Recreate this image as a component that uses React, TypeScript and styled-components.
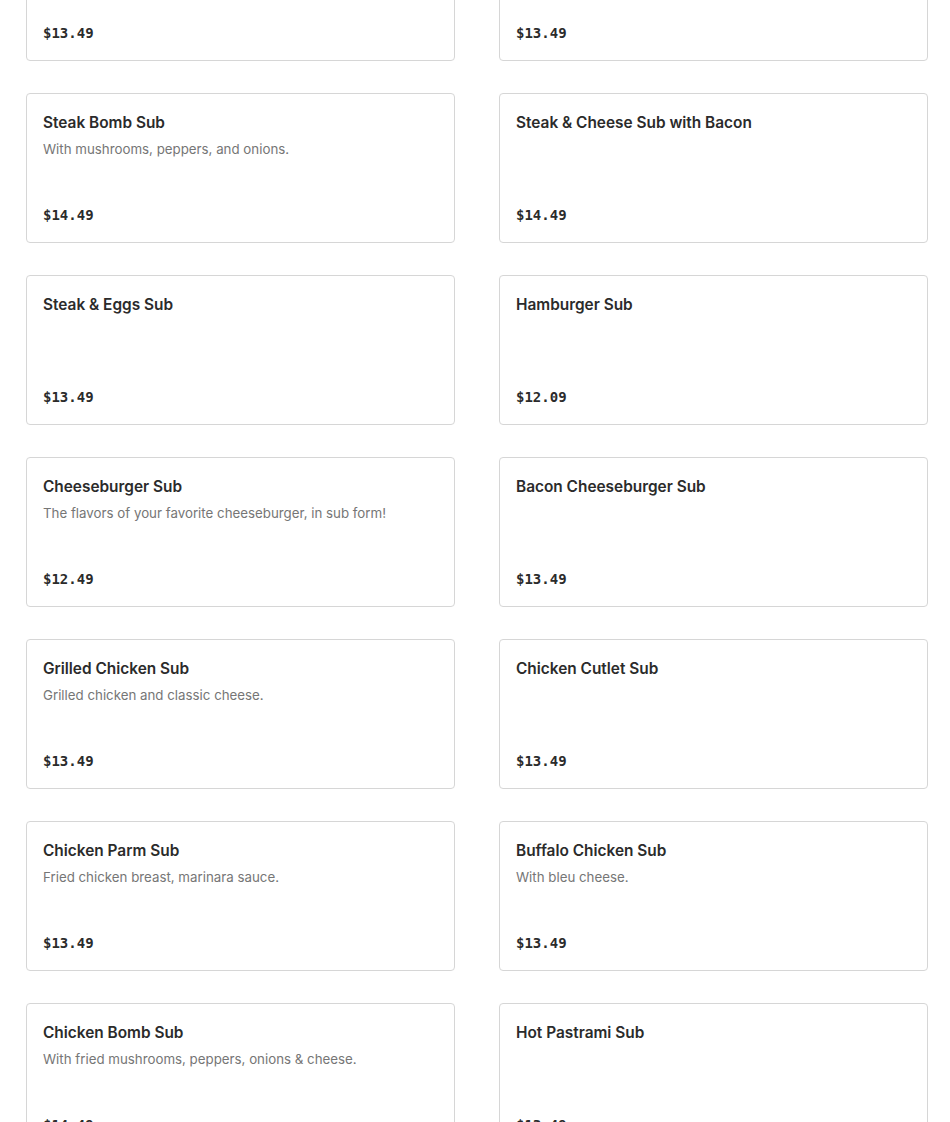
import { useLayoutEffect } from 'react';
import styled, { createGlobalStyle } from 'styled-components';

type MenuItem = {
  name: string;
  description?: string;
  price: string;
};

const ITEMS: MenuItem[] = [
  { name: 'Steak & Cheese Sub', description: 'Shaved steak and classic cheese.', price: '$13.49' },
  { name: 'Steak & Cheese Sub with Mushrooms', price: '$13.49' },
  { name: 'Steak Bomb Sub', description: 'With mushrooms, peppers, and onions.', price: '$14.49' },
  { name: 'Steak & Cheese Sub with Bacon', price: '$14.49' },
  { name: 'Steak & Eggs Sub', price: '$13.49' },
  { name: 'Hamburger Sub', price: '$12.09' },
  { name: 'Cheeseburger Sub', description: 'The flavors of your favorite cheeseburger, in sub form!', price: '$12.49' },
  { name: 'Bacon Cheeseburger Sub', price: '$13.49' },
  { name: 'Grilled Chicken Sub', description: 'Grilled chicken and classic cheese.', price: '$13.49' },
  { name: 'Chicken Cutlet Sub', price: '$13.49' },
  { name: 'Chicken Parm Sub', description: 'Fried chicken breast, marinara sauce.', price: '$13.49' },
  { name: 'Buffalo Chicken Sub', description: 'With bleu cheese.', price: '$13.49' },
  { name: 'Chicken Bomb Sub', description: 'With fried mushrooms, peppers, onions & cheese.', price: '$14.49' },
  { name: 'Hot Pastrami Sub', price: '$13.49' },
  { name: 'Italian Sub', description: 'Ham, salami, capicola and provolone.', price: '$12.49' },
  { name: 'Turkey Sub', price: '$12.49' },
];

const GlobalStyle = createGlobalStyle`
  html, body {
    margin: 0;
    padding: 0;
    background: #ffffff;
  }

  body {
    font-family: 'Inter', 'Noto Sans', sans-serif;
    -webkit-font-smoothing: antialiased;
  }
`;

const App = () => {
  // the reference is captured part-way down the menu
  useLayoutEffect(() => {
    window.scrollTo(0, 113);
  }, []);

  return (
    <>
      <GlobalStyle />
      <Page>
        <Grid>
          {ITEMS.map((item) => (
            <Card key={item.name}>
              <Info>
                <Title>{item.name}</Title>
                {item.description && <Description>{item.description}</Description>}
              </Info>
              <Price>{item.price}</Price>
            </Card>
          ))}
        </Grid>
      </Page>
    </>
  );
};

const Page = styled.main`
  padding: 24px 22px 40px 26px;
`;

const Grid = styled.ul`
  display: grid;
  grid-template-columns: 1fr 1fr;
  column-gap: 44px;
  row-gap: 32px;
  margin: 0;
  padding: 0;
  list-style: none;
`;

const Card = styled.li`
  box-sizing: border-box;
  height: 150px;
  display: flex;
  flex-direction: column;
  justify-content: space-between;
  padding: 19px 16px 18px;
  border: 1px solid #d6d6d6;
  border-radius: 4px;
  background: #ffffff;
`;

const Info = styled.div`
  display: flex;
  flex-direction: column;
  gap: 7px;
`;

const Title = styled.h3`
  margin: 0;
  font-size: 15.4px;
  line-height: 20px;
  font-weight: 600;
  color: #2b2b2b;
`;

const Description = styled.p`
  margin: 0;
  font-size: 13.3px;
  line-height: 18px;
  font-weight: 400;
  color: #767676;
`;

const Price = styled.span`
  font-family: 'DejaVu Sans Mono', 'Liberation Mono', monospace;
  font-size: 14px;
  line-height: 18px;
  font-weight: 600;
  color: #2b2b2b;
`;

export default App;
